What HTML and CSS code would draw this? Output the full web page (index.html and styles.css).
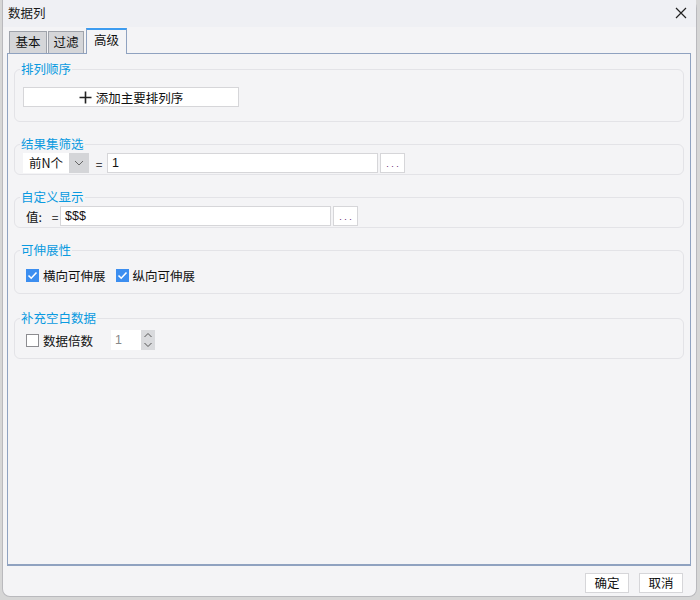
FILE: index.html
```html
<!DOCTYPE html>
<html>
<head>
<meta charset="utf-8">
<link rel="stylesheet" href="styles.css">
</head>
<body>
<div class="dialog">
  <div class="titlebar">
    <span class="title">数据列</span>
    <svg class="close" width="12" height="12" viewBox="0 0 12 12"><path d="M1 1L11 11M11 1L1 11" stroke="#222" stroke-width="1.2" fill="none"/></svg>
  </div>
  <div class="tabs">
    <div class="tab">基本</div>
    <div class="tab">过滤</div>
    <div class="tab active">高级</div>
  </div>
  <div class="panel">
    <fieldset class="group g1">
      <legend>排列顺序</legend>
      <div class="addbtn"><svg width="13" height="13" viewBox="0 0 13 13"><path d="M6.5 0.5V12.5M0.5 6.5H12.5" stroke="#222" stroke-width="1.6"/></svg><span>添加主要排列序</span></div>
    </fieldset>
    <fieldset class="group g2">
      <legend>结果集筛选</legend>
      <div class="row">
        <div class="select"><span class="sel-text">前N个</span><span class="sel-arrow"><svg width="10" height="6" viewBox="0 0 10 6"><path d="M1 1L5 5L9 1" stroke="#666" stroke-width="1" fill="none"/></svg></span></div>
        <span class="eq">=</span>
        <div class="input w271">1</div>
        <div class="dots">. . .</div>
      </div>
    </fieldset>
    <fieldset class="group g3">
      <legend>自定义显示</legend>
      <div class="row">
        <span class="lbl">值:</span>
        <span class="eq eq2">=</span>
        <div class="input w271">$$$</div>
        <div class="dots">. . .</div>
      </div>
    </fieldset>
    <fieldset class="group g4">
      <legend>可伸展性</legend>
      <div class="row checks">
        <label class="chk"><span class="box on"><svg width="13" height="13" viewBox="0 0 13 13"><path d="M2.5 6.5L5.2 9.2L10.5 3.5" stroke="#fff" stroke-width="1.6" fill="none"/></svg></span>横向可伸展</label>
        <label class="chk"><span class="box on"><svg width="13" height="13" viewBox="0 0 13 13"><path d="M2.5 6.5L5.2 9.2L10.5 3.5" stroke="#fff" stroke-width="1.6" fill="none"/></svg></span>纵向可伸展</label>
      </div>
    </fieldset>
    <fieldset class="group g5">
      <legend>补充空白数据</legend>
      <div class="row">
        <label class="chk"><span class="box"></span>数据倍数</label>
        <div class="spin"><span class="spin-val">1</span><span class="spin-btns"><svg width="10" height="18" viewBox="0 0 10 18"><path d="M1.5 6L5 2.5L8.5 6M1.5 12L5 15.5L8.5 12" stroke="#555" stroke-width="1" fill="none"/></svg></span></div>
      </div>
    </fieldset>
  </div>
  <div class="footer">
    <div class="btn">确定</div>
    <div class="btn">取消</div>
  </div>
</div>
</body>
</html>
```
FILE: styles.css
```css
html, body {
  margin: 0;
  padding: 0;
}
body {
  width: 700px;
  height: 600px;
  background: #d6d6d6;
  font-family: "Noto Sans CJK SC", "Microsoft YaHei", sans-serif;
  font-size: 12px;
  color: #111;
  overflow: hidden;
}
.dialog {
  box-sizing: border-box;
  margin-left: 2px;
  width: 695px;
  height: 597px;
  background: #f4f4f6;
  border: 1px solid #b9b9bd;
  border-top: none;
  border-radius: 0 8px 8px 8px;
  display: flex;
  flex-direction: column;
}
.titlebar {
  height: 27px;
  background: #eff0f4;
  display: flex;
  align-items: center;
  justify-content: space-between;
  padding: 0 9px 0 5px;
  flex: none;
}
.title {
  font-size: 12.5px;
  line-height: 14px;
  color: #1a1a1a;
  margin-top: -2px;
}
.close {
  margin-top: -2px;
}
.tabs {
  display: flex;
  align-items: flex-end;
  height: 26px;
  padding-left: 6px;
  flex: none;
  position: relative;
  z-index: 1;
}
.tab {
  box-sizing: border-box;
  height: 22px;
  padding: 0;
  text-align: center;
  margin-right: 1px;
  background: #d5d6d9;
  border: 1px solid #9fa3ab;
  border-bottom: none;
  line-height: 20px;
  font-size: 12.5px;
  white-space: nowrap;
}
.tab:first-child { width: 38px; }
.tab:nth-child(2) { width: 36px; margin-right: 2px; }
.tab.active {
  width: 41px;
  height: 26px;
  background: #f4f4f6;
  border-color: #8fa2c0;
  border-top: 2px solid #3d9cf0;
  line-height: 20px;
  margin-bottom: -1px;
}
.panel {
  box-sizing: border-box;
  margin: 0 5px 0 4px;
  height: 513px;
  border: 1px solid #8fa2c0;
  border-bottom-width: 2px;
  background: #f4f4f6;
  padding: 8px 6px 0 6px;
  flex: none;
}
.group {
  margin: 0;
  padding: 0 8px;
  border: 1px solid #e3e3e7;
  border-radius: 6px;
  box-sizing: border-box;
}
.group legend {
  color: #0a9ae0;
  font-size: 12.5px;
  padding: 0 1px;
  margin-left: -3px;
  line-height: 14px;
}
.g1 { height: 60px; padding-top: 11px; }
.g2 { height: 38px; margin-top: 15px; padding-top: 2px; }
.g3 { height: 38px; margin-top: 15px; padding-top: 2px; }
.g4 { height: 51px; margin-top: 15px; padding-top: 9px; }
.g5 { height: 48px; margin-top: 17px; padding-top: 5px; }
.addbtn {
  box-sizing: border-box;
  width: 216px;
  height: 20px;
  background: #fff;
  border: 1px solid #d6d6d9;
  display: flex;
  align-items: center;
  justify-content: center;
  gap: 4px;
  font-size: 12.5px;
}
.addbtn svg { margin-top: 1px; }
.row {
  display: flex;
  align-items: center;
}
.select {
  box-sizing: border-box;
  width: 66px;
  height: 20px;
  display: flex;
  background: #fff;
}
.sel-text {
  flex: 1;
  padding-left: 6px;
  line-height: 20px;
  font-size: 12.5px;
}
.sel-arrow {
  width: 20px;
  background: #d4d5d8;
  display: flex;
  align-items: center;
  justify-content: center;
}
.eq {
  width: 18px;
  text-align: center;
  font-size: 12px;
  padding-left: 2px;
  box-sizing: border-box;
}
.eq2 { width: 10px; margin-left: 1px; padding-left: 0; }
.lbl {
  margin-left: 3px;
  width: 23px;
  font-size: 12.5px;
}
.input {
  box-sizing: border-box;
  height: 20px;
  background: #fff;
  border: 1px solid #d6d6d9;
  line-height: 18px;
  padding-left: 4px;
  font-family: "Liberation Sans", Arial, sans-serif;
  font-size: 12.5px;
}
.w271 { width: 271px; }
.dots {
  box-sizing: border-box;
  width: 25px;
  height: 20px;
  margin-left: 2px;
  background: #fff;
  border: 1px solid #d6d6d9;
  color: #5a1a6a;
  font-size: 9px;
  line-height: 18px;
  text-align: center;
  font-family: "Liberation Sans", Arial, sans-serif;
  padding-top: 1px;
}
.chk {
  display: flex;
  align-items: center;
  gap: 4px;
  margin-left: 3px;
  font-size: 12.5px;
}
.checks .chk:nth-child(2) { margin-left: 10px; }
.box {
  box-sizing: border-box;
  width: 13px;
  height: 13px;
  border: 1px solid #8c8c90;
  background: #fff;
  display: inline-flex;
}
.box.on {
  background: #3c8ef0;
  border: none;
}
.spin {
  margin-left: 18px;
  width: 44px;
  height: 20px;
  display: flex;
  background: #fff;
}
.spin-val {
  flex: 1;
  padding-left: 4px;
  line-height: 20px;
  color: #888;
  font-family: "Liberation Sans", Arial, sans-serif;
  font-size: 12.5px;
}
.spin-btns {
  width: 14px;
  background: #d9dadd;
  display: flex;
  align-items: center;
  justify-content: center;
}
.footer {
  display: flex;
  justify-content: flex-end;
  gap: 10px;
  padding: 7px 13px 0 0;
}
.btn {
  box-sizing: border-box;
  width: 44px;
  height: 20px;
  background: #fff;
  border: 1px solid #d6d6d9;
  text-align: center;
  line-height: 18px;
  font-size: 12.5px;
}
```
